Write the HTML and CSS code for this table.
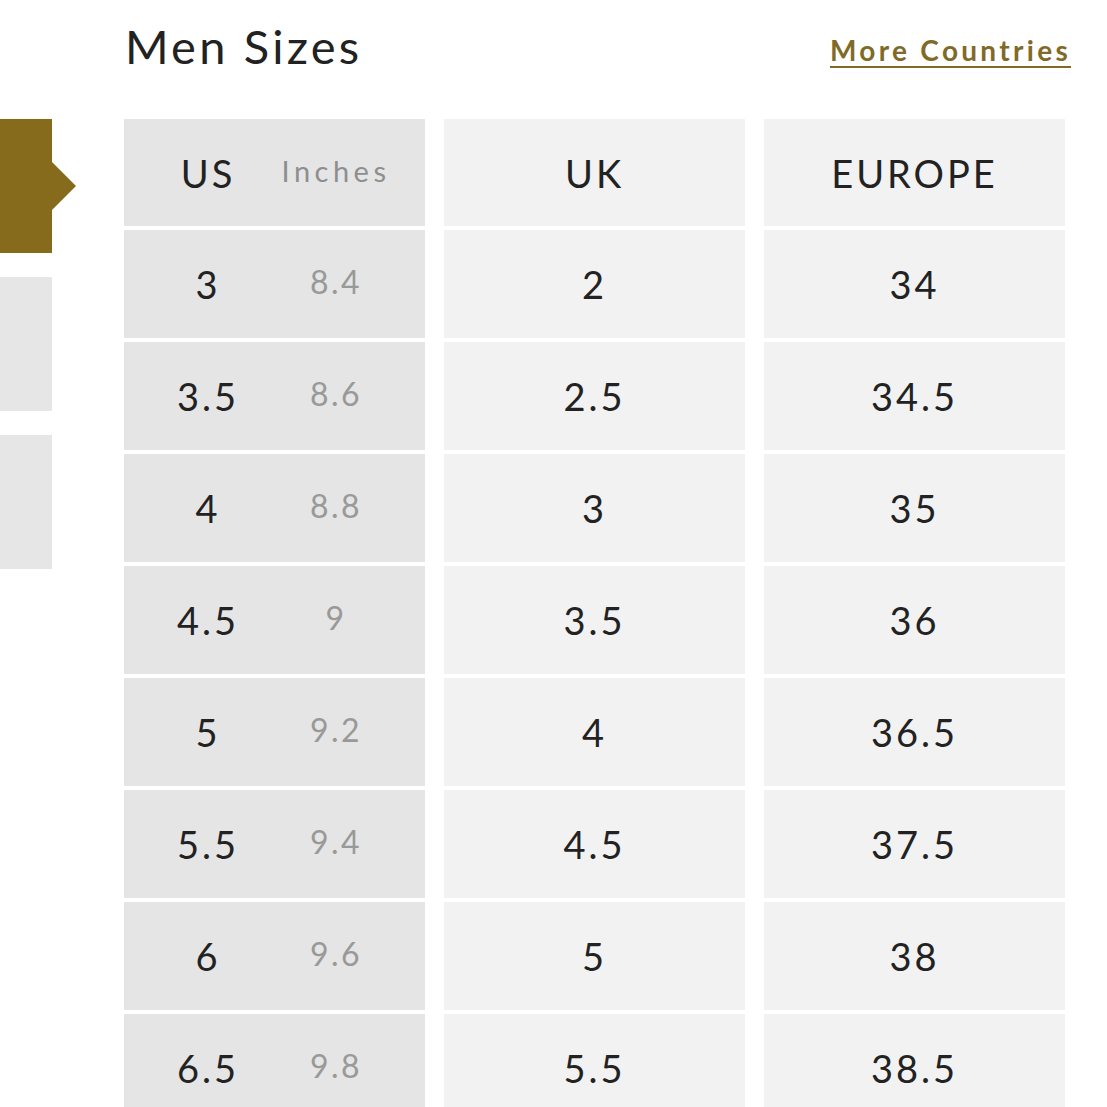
FILE: index.html
```html
<!DOCTYPE html>
<html lang="en">
<head>
<meta charset="utf-8">
<title>Men Sizes</title>
<link rel="stylesheet" href="styles.css">
</head>
<body>
<header class="top">
  <h1 class="title">Men Sizes</h1>
  <a class="more" href="#">More Countries</a>
</header>
<main class="main">
  <nav class="tabs">
    <div class="tab tab-active"></div>
    <div class="tab"></div>
    <div class="tab"></div>
  </nav>
  <div class="chart">
    <div class="cell cell-us head"><span class="us">US</span><span class="inch inch-head">Inches</span></div>
    <div class="cell head">UK</div>
    <div class="cell head">EUROPE</div>

    <div class="cell cell-us"><span class="us">3</span><span class="inch">8.4</span></div>
    <div class="cell">2</div>
    <div class="cell">34</div>

    <div class="cell cell-us"><span class="us">3.5</span><span class="inch">8.6</span></div>
    <div class="cell">2.5</div>
    <div class="cell">34.5</div>

    <div class="cell cell-us"><span class="us">4</span><span class="inch">8.8</span></div>
    <div class="cell">3</div>
    <div class="cell">35</div>

    <div class="cell cell-us"><span class="us">4.5</span><span class="inch">9</span></div>
    <div class="cell">3.5</div>
    <div class="cell">36</div>

    <div class="cell cell-us"><span class="us">5</span><span class="inch">9.2</span></div>
    <div class="cell">4</div>
    <div class="cell">36.5</div>

    <div class="cell cell-us"><span class="us">5.5</span><span class="inch">9.4</span></div>
    <div class="cell">4.5</div>
    <div class="cell">37.5</div>

    <div class="cell cell-us"><span class="us">6</span><span class="inch">9.6</span></div>
    <div class="cell">5</div>
    <div class="cell">38</div>

    <div class="cell cell-us"><span class="us">6.5</span><span class="inch">9.8</span></div>
    <div class="cell">5.5</div>
    <div class="cell">38.5</div>
  </div>
</main>
</body>
</html>
```
FILE: styles.css
```css
html, body {
  margin: 0;
  padding: 0;
  background: #ffffff;
}
body {
  font-family: Lato, "Open Sans", "Liberation Sans", sans-serif;
  color: #222222;
  width: 1107px;
}
.top {
  height: 119px;
  box-sizing: border-box;
  display: flex;
  justify-content: space-between;
  align-items: flex-start;
  padding: 0 36px 0 125px;
}
.title {
  margin: 23px 0 0 0;
  font-size: 47px;
  line-height: 47px;
  font-weight: 400;
  letter-spacing: 3.2px;
  color: #222222;
}
.more {
  margin-top: 36px;
  font-size: 28px;
  line-height: 28px;
  font-weight: 700;
  letter-spacing: 3.3px;
  color: #806a28;
  text-decoration: underline;
  text-decoration-thickness: 2px;
  text-underline-offset: 5px;
}
.main {
  display: flex;
  align-items: flex-start;
}
.tabs {
  width: 52px;
  display: flex;
  flex-direction: column;
  gap: 24px;
  flex: none;
}
.tab {
  height: 134px;
  background: #e6e6e6;
  position: relative;
}
.tab-active {
  background: #876b1c;
}
.tab-active::after {
  content: "";
  position: absolute;
  left: 52px;
  top: 43px;
  border-left: 24px solid #876b1c;
  border-top: 24px solid transparent;
  border-bottom: 24px solid transparent;
}
.chart {
  margin-left: 72px;
  display: grid;
  grid-template-columns: 301px 301px 301px;
  grid-auto-rows: 108px;
  grid-template-rows: 107px;
  column-gap: 19px;
  row-gap: 4px;
}
.cell {
  background: #f2f2f2;
  display: flex;
  align-items: center;
  justify-content: center;
  font-size: 38px;
  letter-spacing: 3px;
  color: #222222;
}
.cell.head {
  letter-spacing: 3px;
}
.cell-us {
  background: #e5e5e5;
  justify-content: flex-start;
  padding-left: 20px;
}
.us {
  width: 128px;
  text-align: center;
}
.inch {
  width: 128px;
  text-align: center;
  font-size: 32px;
  color: #999999;
  letter-spacing: 2.5px;
  margin-bottom: 5px;
}
.inch-head {
  font-size: 29px;
  letter-spacing: 4.5px;
  color: #8e8e8e;
}
```
